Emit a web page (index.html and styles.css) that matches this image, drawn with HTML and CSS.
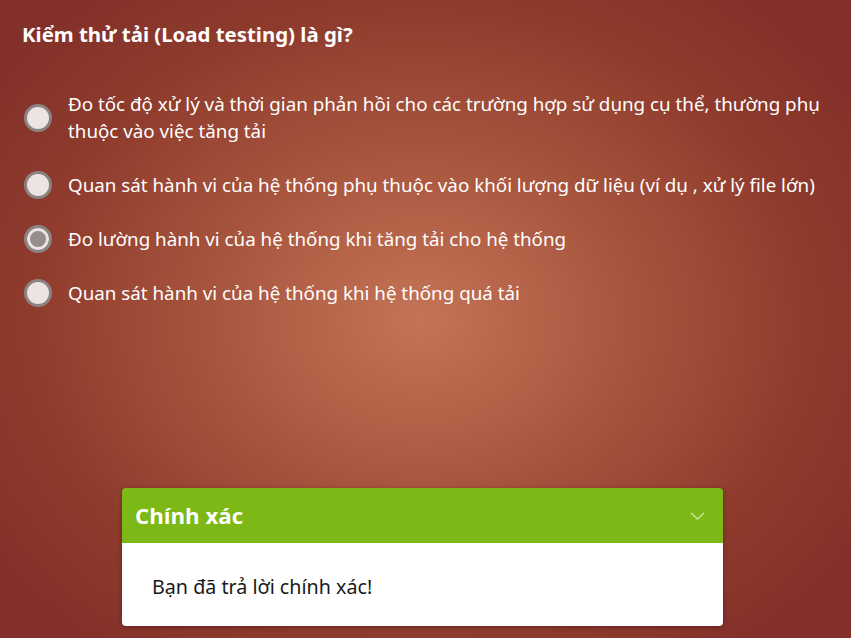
FILE: index.html
```html
<!DOCTYPE html>
<html lang="vi">
<head>
<meta charset="utf-8">
<link rel="stylesheet" href="styles.css">
</head>
<body>
<div class="page">
  <h1 class="question">Kiểm thử tải (Load testing) là gì?</h1>
  <ul class="options">
    <li class="option"><span class="radio"></span><span class="label">Đo tốc độ xử lý và thời gian phản hồi cho các trường hợp sử dụng cụ thể, thường phụ thuộc vào việc tăng tải</span></li>
    <li class="option"><span class="radio"></span><span class="label">Quan sát hành vi của hệ thống phụ thuộc vào khối lượng dữ liệu (ví dụ , xử lý file lớn)</span></li>
    <li class="option"><span class="radio checked"></span><span class="label">Đo lường hành vi của hệ thống khi tăng tải cho hệ thống</span></li>
    <li class="option"><span class="radio"></span><span class="label">Quan sát hành vi của hệ thống khi hệ thống quá tải</span></li>
  </ul>
  <div class="feedback">
    <div class="fb-head">
      <span class="fb-title">Chính xác</span>
      <svg class="chev" width="15" height="8" viewBox="0 0 15 8"><path d="M1 1 L7.5 7 L14 1" fill="none" stroke="#cfe5a4" stroke-width="1.3"/></svg>
    </div>
    <div class="fb-body">Bạn đã trả lời chính xác!</div>
  </div>
</div>
</body>
</html>
```
FILE: styles.css
```css
html, body {
  margin: 0;
  padding: 0;
  height: 100%;
}
body {
  background: radial-gradient(ellipse 520px 420px at 420px 320px, #c47456 0%, #a8553e 40%, #8e3b2d 75%, #83302a 100%);
  background-color: #83302a;
  font-family: "Noto Sans", "Open Sans", sans-serif;
  color: #fff;
  overflow: hidden;
}
.page {
  padding: 19px 0 0 22px;
  height: 638px;
  box-sizing: border-box;
  display: flex;
  flex-direction: column;
}
.question {
  margin: 0;
  font-size: 20.4px;
  font-weight: 700;
  line-height: 30px;
}
.options {
  list-style: none;
  margin: 42px 0 0 2px;
  padding: 0;
  display: flex;
  flex-direction: column;
  gap: 26px;
}
.option {
  display: flex;
  align-items: center;
  gap: 16px;
  font-size: 18.8px;
  line-height: 27px;
  padding-right: 20px;
}
.radio {
  flex: none;
  width: 28px;
  height: 28px;
  box-sizing: border-box;
  border: 3px solid #8a8382;
  border-radius: 50%;
  background: #ede3e3;
}
.radio.checked {
  background: #968c8b;
  box-shadow: inset 0 0 0 3px #ede3e3;
}
.feedback {
  margin-top: auto;
  margin-bottom: 12px;
  margin-left: 100px;
  width: 601px;
  border-radius: 4px;
  overflow: hidden;
  box-shadow: 0 1px 4px rgba(0,0,0,0.35);
}
.fb-head {
  background: #7cb916;
  height: 55px;
  display: flex;
  align-items: center;
  justify-content: space-between;
  padding: 0 18px 0 13px;
}
.fb-title {
  font-family: "Open Sans", sans-serif;
  font-weight: 700;
  font-size: 22.2px;
}
.chev {
  margin-top: 1px;
}
.fb-body {
  background: #fff;
  color: #1a1a1a;
  font-size: 19.7px;
  height: 83px;
  display: flex;
  align-items: center;
  padding: 4px 0 0 30px;
  box-sizing: border-box;
}
```
